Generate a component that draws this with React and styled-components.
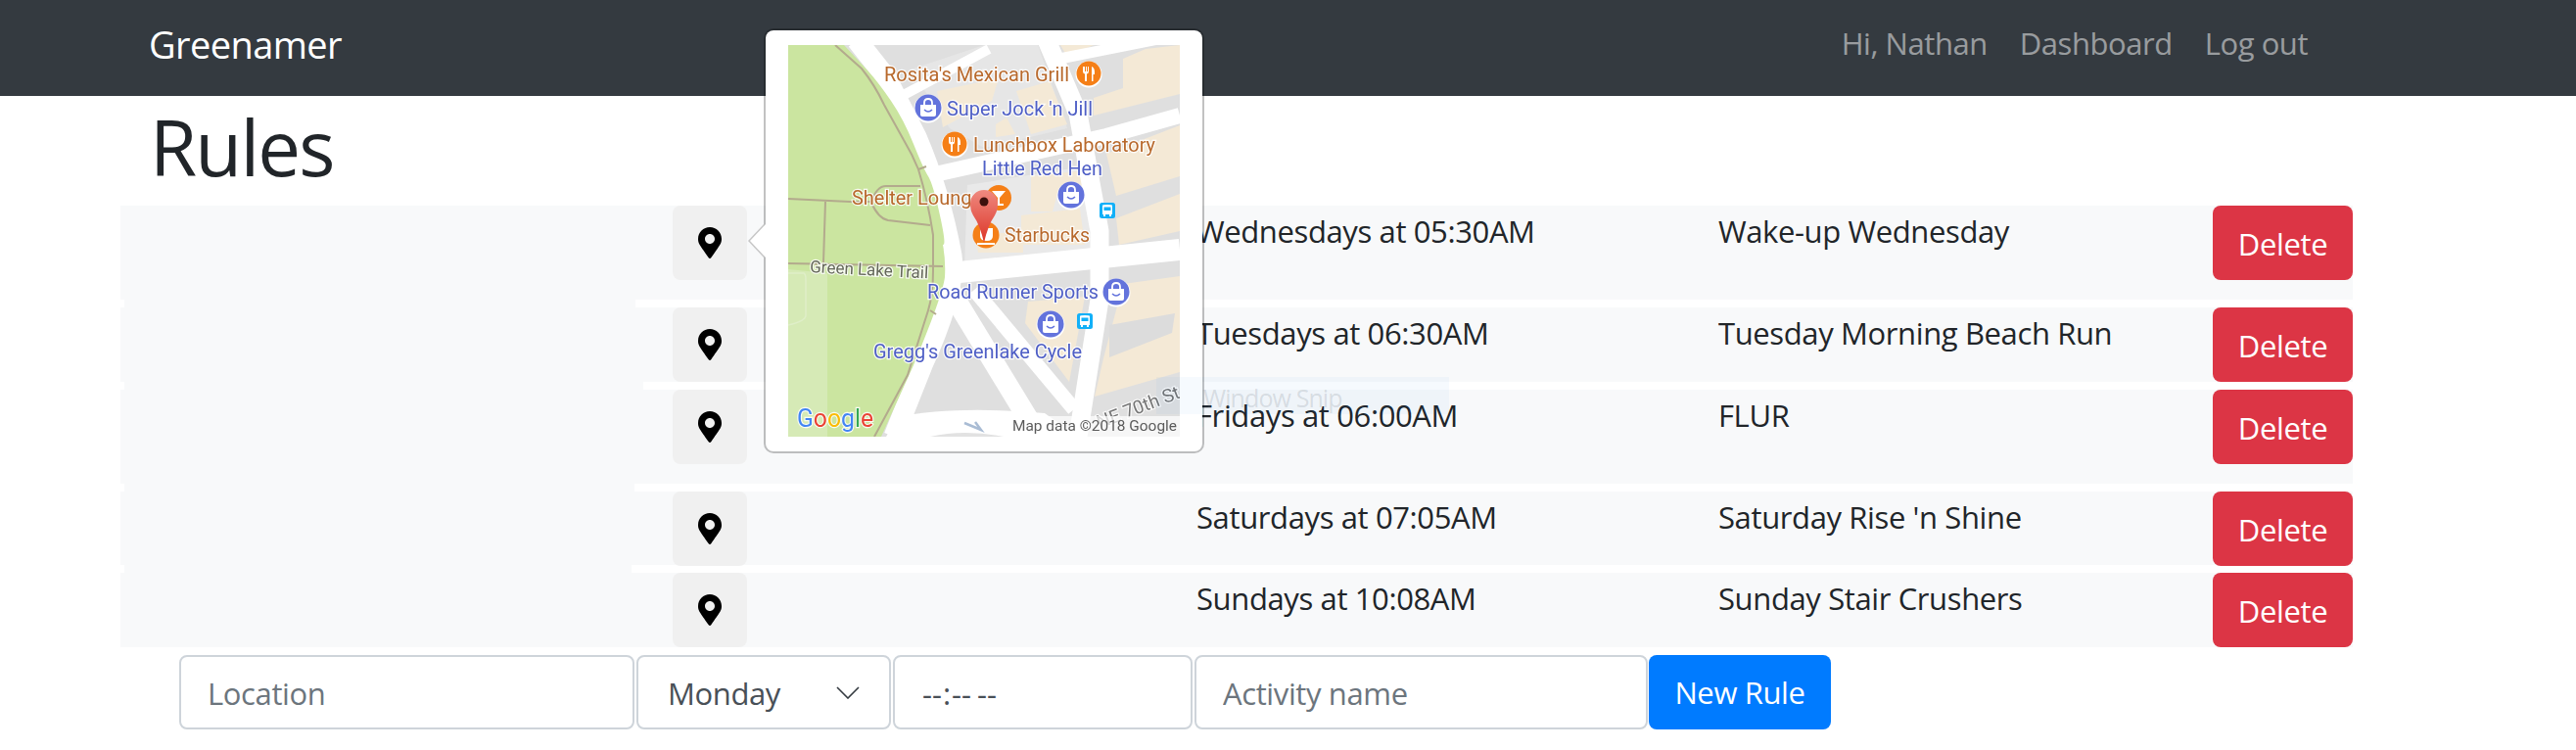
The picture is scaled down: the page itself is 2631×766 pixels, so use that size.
import React from 'react';
import styled, { createGlobalStyle } from 'styled-components';
import { FaMapMarkerAlt } from 'react-icons/fa';

const GlobalStyle = createGlobalStyle`
  html, body {
    margin: 0;
    padding: 0;
    background: #fff;
    overflow: hidden;
  }
  * { box-sizing: border-box; }
  body {
    font-family: "Open Sans", "Noto Sans", sans-serif;
    color: #212529;
  }
`;

const Page = styled.div`
  position: relative;
  width: 2631px;
  height: 766px;
  overflow: hidden;
`;

const Navbar = styled.nav`
  display: flex;
  align-items: center;
  height: 98px;
  padding: 0 274px 10px 152px;
  background: #343a40;
`;

const Brand = styled.a`
  padding-top: 2px;
  font-size: 38px;
  letter-spacing: -0.6px;
  color: #fff;
`;

const NavLinks = styled.div`
  display: flex;
  gap: 33px;
  margin-left: auto;
`;

const NavLink = styled.a`
  font-size: 31px;
  letter-spacing: -0.45px;
  color: rgba(255, 255, 255, 0.5);
`;

const Title = styled.h1`
  height: 112px;
  margin: 0;
  padding: 0 0 0 153px;
  font-size: 78px;
  font-weight: 400;
  line-height: 105px;
  letter-spacing: -1.8px;
`;

const Rows = styled.div`
  margin-left: 123px;
  width: 2280px;
`;

const Row = styled.div`
  display: grid;
  grid-template-columns: 565px 534px 533px 505px 143px;
  align-items: start;
  height: ${(p) => p.$height}px;
  background: #f8f9fa;
  font-size: 31px;
  letter-spacing: -0.38px;
  line-height: 52px;
`;

// the blanked-out location column runs across the gap between two rows
const RowGap = styled.div`
  height: 8px;
  padding-left: 4px;
`;

const GapFill = styled.div`
  width: ${(p) => p.$width}px;
  height: 100%;
  background: #f8f9fa;
`;

const PinButton = styled.button`
  display: flex;
  align-items: center;
  justify-content: center;
  grid-column: 1 / 2;
  justify-self: end;
  width: 76px;
  height: 76px;
  margin-right: -75px;
  padding: 0;
  border: 0;
  border-radius: 8px;
  background: #f0f0f0;
  color: #000;
  font-size: 32px;
`;

const DateCell = styled.div`
  grid-column: 3;
`;

const NameCell = styled.div`
  grid-column: 4;
`;

const DeleteButton = styled.button`
  grid-column: 5;
  height: 76px;
  padding: 2px 0 0;
  border: 0;
  border-radius: 8px;
  background: #dc3545;
  color: #fff;
  font-family: inherit;
  font-size: 31px;
  letter-spacing: -0.38px;
`;

const NewRuleForm = styled.form`
  display: flex;
  height: 76px;
  margin: 8px 0 0 183px;
`;

const Field = styled.input`
  width: ${(p) => p.$width}px;
  height: 76px;
  margin-right: ${(p) => (p.$last ? 1 : 2)}px;
  padding: 2px 26px 0 27px;
  border: 2px solid #ced4da;
  border-radius: 8px;
  background: #fff;
  color: #495057;
  font-family: inherit;
  font-size: 31px;
  letter-spacing: -0.38px;

  &::placeholder {
    color: #6c757d;
    opacity: 1;
  }

  &[type='time'] {
    letter-spacing: 1.8px;
  }

  &::-webkit-calendar-picker-indicator {
    display: none;
  }
`;

const DaySelect = styled.select`
  width: 260px;
  height: 76px;
  margin-right: 2px;
  padding: 2px 0 0 30px;
  border: 2px solid #ced4da;
  border-radius: 8px;
  background: #fff url("data:image/svg+xml,%3Csvg xmlns='http://www.w3.org/2000/svg' width='24' height='13'%3E%3Cpath d='M1 1l11 11L23 1' fill='none' stroke='%23343a40' stroke-width='1.6'/%3E%3C/svg%3E") no-repeat right 30px center;
  appearance: none;
  color: #495057;
  font-family: inherit;
  font-size: 31px;
  letter-spacing: -0.38px;
`;

const NewRuleButton = styled.button`
  width: 186px;
  height: 76px;
  padding: 0;
  border: 0;
  border-radius: 8px;
  background: #007bff;
  color: #fff;
  font-family: inherit;
  font-size: 31px;
  letter-spacing: -0.38px;
`;

const Popover = styled.div`
  position: absolute;
  left: 780px;
  top: 29px;
  width: 450px;
  height: 434px;
  padding: 15px 23px;
  border: 2px solid rgba(0, 0, 0, 0.24);
  border-radius: 10px;
  background: #fff;
  background-clip: padding-box;

  &::before,
  &::after {
    content: '';
    position: absolute;
    top: 198px;
    width: 0;
    height: 0;
    border-style: solid;
    border-width: 17px 16px 17px 0;
    border-color: transparent;
  }

  &::before {
    left: -18px;
    border-right-color: #c6c6c6;
  }

  &::after {
    left: -16px;
    border-right-color: #fff;
  }
`;

const MapImage = styled.svg`
  display: block;
  width: 400px;
  height: 400px;
  filter: blur(0.45px);
`;

const MapLabel = styled.text`
  font-family: Roboto, "Liberation Sans", sans-serif;
  font-size: ${(p) => p.$size || 19.5}px;
  fill: ${(p) => p.$color};
  stroke: rgba(255, 255, 255, 0.85);
  stroke-width: 2.4px;
  paint-order: stroke;
`;

const SnipGhost = styled.div`
  position: absolute;
  left: 1181px;
  top: 385px;
  width: 299px;
  height: 38px;
  padding: 7px 0 0 48px;
  background: rgba(0, 120, 215, 0.035);
  color: rgba(90, 100, 110, 0.18);
  font-size: 25px;
  line-height: 28px;
  letter-spacing: -0.9px;
  pointer-events: none;
`;

const ORANGE = '#f57f17';
const BLUE = '#6373dc';
const BROWN = '#b8692c';
const INDIGO = '#4f5fc6';

const FoodPoi = ({ x, y }) => (
  <g transform={`translate(${x} ${y})`}>
    <circle r="13.5" fill="#fff" cy="1" />
    <circle r="12.5" fill={ORANGE} />
    <path d="M-6-7v5q0 2 2 2.5V8h2V.5Q0 0 0-2v-5h-1v5h-1v-5h-1v5h-1v-5zM3-7q3 1 3 6v2H4.5V8H3z" fill="#fff" />
  </g>
);

const BagPoi = ({ x, y }) => (
  <g transform={`translate(${x} ${y})`}>
    <circle r="14.5" fill="#fff" cy="1" />
    <circle r="13.5" fill={BLUE} />
    <path d="M-8-3H8V7Q8 9 6 9H-6Q-8 9-8 7z" fill="#fff" />
    <path d="M-4-3V-5Q-4-9 0-9T4-5V-3" fill="none" stroke="#fff" strokeWidth="1.8" />
    <path d="M-4 2Q0 6 4 2" fill="none" stroke={BLUE} strokeWidth="1.5" />
  </g>
);

const BusPoi = ({ x, y }) => (
  <g transform={`translate(${x} ${y})`}>
    <rect x="-8" y="-8" width="16" height="16" rx="2.5" fill="#12b0f8" />
    <path d="M-5-5Q-5-6 0-6T5-5V4H4V6H2V4H-2V6H-4V4H-5z" fill="#fff" />
    <rect x="-3.5" y="-3.5" width="7" height="3.5" fill="#12b0f8" />
  </g>
);

const MapPicture = () => (
  <MapImage viewBox="0 0 400 400">
    <defs>
      <linearGradient id="markerFill" x1="0" y1="0" x2="0" y2="1">
        <stop offset="0" stopColor="#ef8a80" />
        <stop offset="1" stopColor="#dc3427" />
      </linearGradient>
    </defs>
    <rect width="400" height="400" fill="#dfdfdf" />

    <path d="M183 143L315 122L322 215L180 228z" fill="#e9e9e9" />
    <path d="M125 25L200 0H255L285 85L200 105L165 85z" fill="#e6e6e6" />

    <g fill="#f4e9d6">
      <path d="M278 0H312L285 12z" />
      <path d="M312 54L342 44V14L365 4L400 0V50L312 72z" />
      <path d="M325 111L400 82V134L335 154z" />
      <path d="M335 177L400 152V190L338 204z" />
      <path d="M248 134L305 128L310 148L275 152L270 170L248 170z" />
      <path d="M238 174L298 167L303 204L238 204z" />
      <path d="M233 47L267 37L285 81L248 91z" />
      <path d="M212 81L223 74L232 91L212 94z" />
      <path d="M152 47L215 34L208 57L158 84z" />
      <path d="M190 192H240V212H194z" />
      <path d="M342 244L400 236V334L313 359L322 320z" />
      <path d="M245 262L303 257L287 344L242 284z" />
    </g>
    <path d="M328 286L395 274L392 294L328 319z" fill="#dcdcdc" />

    <g fill="none" stroke="#fff" strokeLinejoin="round">
      <path d="M70-5L100 33L131 94Q155 150 167 215Q172 250 137 327L108 400" strokeWidth="21" />
      <path d="M150 132L325 93L400 72" strokeWidth="16" />
      <path d="M264-5L296 70L318 190V260L296 400" strokeWidth="19" />
      <path d="M165 233Q240 225 400 209" strokeWidth="22" />
      <path d="M118 51L205 4" strokeWidth="10" />
      <path d="M277 14L378-6" strokeWidth="11" />
      <path d="M165 250L255 398" strokeWidth="21" />
      <path d="M190 250L292 372" strokeWidth="15" />
    </g>
    <path d="M112 380Q170 368 262 376L296 400H100z" fill="#fff" />
    <path d="M145 400Q180 392 220 400z" fill="#e2e2e2" />
    <path d="M180 386L197 393L191 385" fill="none" stroke="#a9bcd4" strokeWidth="2.5" />

    <path d="M0 0H57Q72 16 82 27T105 57T128 101T143 134T155 174T158 204Q161 220 160 237Q158 255 128 327L95 400H0z" fill="#cbe5a0" />
    <path d="M0 229L40 233V400H0z" fill="#d6eab6" />
    <path d="M0 233H16Q18 234 18 240V276Q18 282 0 286" fill="none" stroke="#dfeec8" strokeWidth="1.5" />

    <g fill="none" stroke="#b3aa8d" strokeWidth="2">
      <path d="M48 0L75 24Q88 40 98 61L118 97Q127 112 133 127Q143 160 148 194V231Q148 255 143 271L122 337L88 400" />
      <path d="M0 157L63 160H85" />
      <path d="M38 160L36 222" />
      <path d="M0 223L158 226" />
      <path d="M85 161Q92 177 102 179L145 184" />
      <path d="M85 161Q90 144 100 144H135" />
      <path d="M133 127L141 124" />
      <path d="M145 271L151 275" />
    </g>

    <MapLabel x="98" y="37" $color={BROWN} textLength="189" lengthAdjust="spacingAndGlyphs">Rosita's Mexican Grill</MapLabel>
    <MapLabel x="162" y="72" $color={INDIGO} textLength="149" lengthAdjust="spacingAndGlyphs">Super Jock 'n Jill</MapLabel>
    <MapLabel x="189" y="109" $color={BROWN} textLength="186" lengthAdjust="spacingAndGlyphs">Lunchbox Laboratory</MapLabel>
    <MapLabel x="198" y="133" $color={INDIGO} textLength="123" lengthAdjust="spacingAndGlyphs">Little Red Hen</MapLabel>
    <MapLabel x="65" y="163" $color={BROWN} textLength="133" lengthAdjust="spacingAndGlyphs">Shelter Lounge</MapLabel>
    <MapLabel x="221" y="201" $color={BROWN} textLength="87" lengthAdjust="spacingAndGlyphs">Starbucks</MapLabel>
    <MapLabel x="22" y="232" $size={17} $color="#646759" textLength="121" lengthAdjust="spacingAndGlyphs" transform="rotate(3 22 232)">Green Lake Trail</MapLabel>
    <MapLabel x="142" y="259" $color={INDIGO} textLength="175" lengthAdjust="spacingAndGlyphs">Road Runner Sports</MapLabel>
    <MapLabel x="87" y="320" $color={INDIGO} textLength="213" lengthAdjust="spacingAndGlyphs">Gregg's Greenlake Cycle</MapLabel>
    <MapLabel x="318" y="392" $size={19} $color="#757575" transform="rotate(-21 318 392)">NE 70th St</MapLabel>

    <FoodPoi x={307} y={29} />
    <BagPoi x={143} y={64} />
    <FoodPoi x={170} y={101} />
    <g transform="translate(215 156)">
      <circle r="13" fill={ORANGE} />
      <path d="M-7-7H7L1 0V6H5V8H-5V6H-1V0z" fill="#fff" />
    </g>
    <BagPoi x={289} y={153} />
    <BusPoi x={326} y={169} />
    <g transform="translate(202 194)">
      <circle r="13.5" fill={ORANGE} />
      <path d="M-9 8H9V10H-9zM-6-7H7V1Q7 6 1 6Q-6 6-6 1z" fill="#fff" />
    </g>
    <BagPoi x={335} y={252} />
    <BagPoi x={268} y={285} />
    <BusPoi x={303} y={282} />

    <path d="M200 202Q196 184 189 174Q186 169 186 162A14 14 0 0 1 214 162Q214 169 211 174Q204 184 200 202z" fill="url(#markerFill)" />
    <circle cx="200" cy="160" r="4.5" fill="#3d100c" />

    <rect x="222" y="379" width="178" height="21" fill="rgba(255,255,255,0.72)" />
    <MapLabel x="229" y="394" $size={14.5} $color="#5b5b5b" textLength="168" lengthAdjust="spacingAndGlyphs" style={{ stroke: 'none' }}>Map data ©2018 Google</MapLabel>
    <MapLabel x="9" y="390" $size={26} $color="#4285f4" textLength="78" lengthAdjust="spacingAndGlyphs">
      G<tspan fill="#ea4335">o</tspan><tspan fill="#fbbc05">o</tspan><tspan fill="#4285f4">g</tspan><tspan fill="#34a853">l</tspan><tspan fill="#ea4335">e</tspan>
    </MapLabel>
  </MapImage>
);

const rules = [
  { when: 'Wednesdays at 05:30AM', name: 'Wake-up Wednesday', height: 96, gap: 522 },
  { when: 'Tuesdays at 06:30AM', name: 'Tuesday Morning Beach Run', height: 76, gap: 530 },
  { when: 'Fridays at 06:00AM', name: 'FLUR', height: 96, gap: 521 },
  { when: 'Saturdays at 07:05AM', name: "Saturday Rise 'n Shine", height: 75, gap: 518 },
  { when: 'Sundays at 10:08AM', name: 'Sunday Stair Crushers', height: 76 },
];

const App = () => (
  <Page>
    <GlobalStyle />
    <Navbar>
      <Brand>Greenamer</Brand>
      <NavLinks>
        <NavLink>Hi, Nathan</NavLink>
        <NavLink>Dashboard</NavLink>
        <NavLink>Log out</NavLink>
      </NavLinks>
    </Navbar>
    <Title>Rules</Title>
    <Rows>
      {rules.map((rule) => (
        <React.Fragment key={rule.when}>
          <Row $height={rule.height}>
            <PinButton type="button"><FaMapMarkerAlt /></PinButton>
            <DateCell>{rule.when}</DateCell>
            <NameCell>{rule.name}</NameCell>
            <DeleteButton type="button">Delete</DeleteButton>
          </Row>
          {rule.gap && (
            <RowGap>
              <GapFill $width={rule.gap} />
            </RowGap>
          )}
        </React.Fragment>
      ))}
    </Rows>
    <NewRuleForm>
      <Field $width={465} placeholder="Location" />
      <DaySelect defaultValue="Monday">
        <option>Monday</option>
        <option>Tuesday</option>
        <option>Wednesday</option>
        <option>Thursday</option>
        <option>Friday</option>
        <option>Saturday</option>
        <option>Sunday</option>
      </DaySelect>
      <Field $width={306} type="time" />
      <Field $width={463} $last placeholder="Activity name" />
      <NewRuleButton type="button">New Rule</NewRuleButton>
    </NewRuleForm>
    <Popover>
      <MapPicture />
    </Popover>
    <SnipGhost>Window Snip</SnipGhost>
  </Page>
);

export default App;
